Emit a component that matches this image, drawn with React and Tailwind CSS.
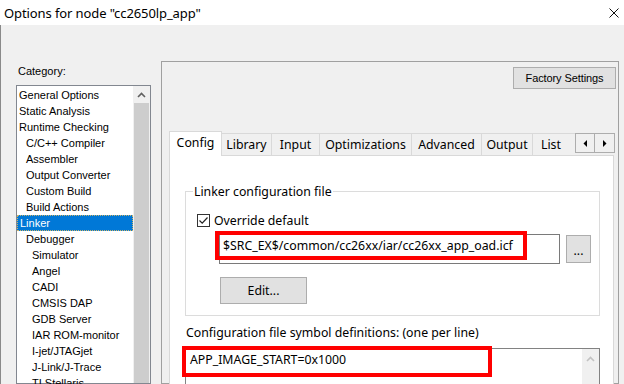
import React from 'react';

const categories = [
  { label: 'General Options', pad: 'pl-[2px]' },
  { label: 'Static Analysis', pad: 'pl-[2px]' },
  { label: 'Runtime Checking', pad: 'pl-[2px]' },
  { label: 'C/C++ Compiler', pad: 'pl-[9px]' },
  { label: 'Assembler', pad: 'pl-[9px]' },
  { label: 'Output Converter', pad: 'pl-[9px]' },
  { label: 'Custom Build', pad: 'pl-[9px]' },
  { label: 'Build Actions', pad: 'pl-[9px]' },
  { label: 'Linker', pad: 'pl-[2px]', selected: true },
  { label: 'Debugger', pad: 'pl-[9px]' },
  { label: 'Simulator', pad: 'pl-[15px]' },
  { label: 'Angel', pad: 'pl-[15px]' },
  { label: 'CADI', pad: 'pl-[15px]' },
  { label: 'CMSIS DAP', pad: 'pl-[15px]' },
  { label: 'GDB Server', pad: 'pl-[15px]' },
  { label: 'IAR ROM-monitor', pad: 'pl-[15px]' },
  { label: 'I-jet/JTAGjet', pad: 'pl-[15px]' },
  { label: 'J-Link/J-Trace', pad: 'pl-[15px]' },
  { label: 'TI Stellaris', pad: 'pl-[15px]' },
];

const tabs = [
  { label: 'Config', w: 'w-[53px]', active: true },
  { label: 'Library', w: 'w-[50px]' },
  { label: 'Input', w: 'w-[48px]' },
  { label: 'Optimizations', w: 'w-[92px]' },
  { label: 'Advanced', w: 'w-[70px]' },
  { label: 'Output', w: 'w-[51px]' },
  { label: 'List', w: 'w-[42px]', clipped: true },
];

function Tab({ tab }) {
  if (tab.active) {
    return (
      <div className={`${tab.w} h-[25px] -mb-px relative z-10 bg-white border-x border-t border-[#d9d9d9] flex items-start justify-center pt-[2px]`}>
        {tab.label}
      </div>
    );
  }
  return (
    <div
      className={`${tab.w} h-[22px] bg-[#f0f0f0] border-t border-[#d9d9d9] flex items-center ${
        tab.clipped ? 'justify-start pl-[8px]' : 'justify-center border-r'
      }`}
    >
      {tab.label}
    </div>
  );
}

export default function App() {
  return (
    <div className="relative w-[624px] h-[384px] overflow-hidden bg-[#f0f0f0] flex flex-col text-black font-['Noto_Sans','Open_Sans',sans-serif] text-[12.3px] leading-[17px]">
      {/* Title bar */}
      <div className="h-[25px] shrink-0 bg-white flex items-center justify-between pl-[4px] pr-[5px]">
        <span className="text-[13px] leading-[20px] tracking-[-0.1px]">Options for node "cc2650lp_app"</span>
        <svg width="10" height="10" viewBox="0 0 10 10" className="mt-[1px]">
          <path d="M0.5 0.5 L9.5 9.5 M9.5 0.5 L0.5 9.5" stroke="#111" strokeWidth="1" fill="none" />
        </svg>
      </div>

      {/* Body */}
      <div className="flex-1 flex border-l border-[#8a8a8a] pl-[15px] min-h-0">
        {/* Category column */}
        <div className="w-[135px] shrink-0 flex flex-col font-['Liberation_Sans',Arial,sans-serif] text-[11px] leading-[15px]">
          <div className="pt-[39px] pl-[2px]">Category:</div>
          <div className="mt-[6px] flex-1 bg-white border border-[#828790] flex min-h-0">
            <div className="flex-1 pt-[1px] flex flex-col">
              {categories.map((c) =>
                c.selected ? (
                  <div
                    key={c.label}
                    className="h-[16px] bg-[#0078d7] text-white border border-dotted border-[#c9b26a] flex items-center pl-[2px] shrink-0"
                  >
                    {c.label}
                  </div>
                ) : (
                  <div key={c.label} className={`h-[16px] flex items-center shrink-0 whitespace-nowrap ${c.pad}`}>
                    {c.label}
                  </div>
                )
              )}
            </div>
            <div className="w-[17px] bg-[#f0f0f0] flex flex-col">
              <div className="h-[17px] flex items-center justify-center">
                <svg width="9" height="6" viewBox="0 0 9 6">
                  <path d="M1 5 L4.5 1.5 L8 5" stroke="#606060" strokeWidth="1.6" fill="none" />
                </svg>
              </div>
              <div className="flex-1 mx-[1px] bg-[#cdcdcd]" />
            </div>
          </div>
        </div>

        {/* Options panel */}
        <div className="ml-[10px] mt-[36px] w-[458px] shrink-0 border border-[#a0a0a0] flex flex-col pl-[7px] pr-[3px]">
          <div className="flex justify-end pt-[5px] -mr-[1px]">
            <button className="w-[103px] h-[22px] bg-[#e1e1e1] border border-[#adadad] font-['Liberation_Sans',Arial,sans-serif] text-[11px] leading-[15px] tracking-[-0.1px]">
              Factory Settings
            </button>
          </div>

          {/* Tab strip */}
          <div className="mt-[42px] h-[24px] flex items-end">
            {tabs.map((t) => (
              <Tab key={t.label} tab={t} />
            ))}
            <div className="self-start mt-[2px] flex">
              <div className="w-[20px] h-[20px] bg-[#f0f0f0] border border-[#adadad] flex items-center justify-center">
                <svg width="4" height="7" viewBox="0 0 4 7">
                  <path d="M4 0 L0.5 3.5 L4 7 Z" fill="#000" />
                </svg>
              </div>
              <div className="w-[20px] h-[20px] bg-[#f0f0f0] border border-l-0 border-[#adadad] flex items-center justify-center">
                <svg width="4" height="7" viewBox="0 0 4 7">
                  <path d="M0 0 L3.5 3.5 L0 7 Z" fill="#000" />
                </svg>
              </div>
            </div>
          </div>

          {/* Tab content */}
          <div className="flex-1 mr-[1px] bg-white border border-[#d9d9d9] pl-[15px] pr-[13px] flex flex-col">
            {/* Group box */}
            <div className="relative mt-[35px] border border-[#dcdcdc] pl-[11px] pb-[11px]">
              <span className="absolute -top-[9px] left-[7px] bg-white px-[1px]">Linker configuration file</span>
              <div className="mt-[20px] h-[16px] flex items-center gap-[4px]">
                <div className="w-[13px] h-[13px] border border-[#333] bg-white flex items-center justify-center">
                  <svg width="11" height="11" viewBox="0 0 11 11">
                    <path d="M1.5 5.5 L4.2 8.2 L9.5 2.5" stroke="#222" strokeWidth="1.2" fill="none" />
                  </svg>
                </div>
                <span>Override default</span>
              </div>
              <div className="mt-[6px] pl-[22px] flex items-start gap-[6px]">
                <div className="w-[341px] h-[30px] border border-[#7a7a7a] bg-white pl-[3px] pt-[2px] whitespace-nowrap">
                  $SRC_EX$/common/cc26xx/iar/cc26xx_app_oad.icf
                </div>
                <button className="mt-[1px] w-[25px] h-[28px] bg-[#e1e1e1] border border-[#adadad] flex items-end justify-center pb-[6px] leading-[10px]">
                  ...
                </button>
              </div>
              <button className="mt-[13px] ml-[23px] w-[87px] h-[27px] bg-[#e1e1e1] border border-[#adadad] flex items-center justify-center">
                Edit...
              </button>
            </div>

            <div className="mt-[8px] pl-[1px]">Configuration file symbol definitions: (one per line)</div>

            <div className="mt-[7px] h-[60px] border border-[#828282] bg-white flex">
              <div className="flex-1 pl-[4px] pt-[2px]">APP_IMAGE_START=0x1000</div>
              <div className="w-[17px] bg-[#f0f0f0] flex flex-col items-center">
                <svg width="9" height="6" viewBox="0 0 9 6" className="mt-[7px]">
                  <path d="M1 5 L4.5 1.5 L8 5" stroke="#c2c2c2" strokeWidth="1.6" fill="none" />
                </svg>
              </div>
            </div>
          </div>
        </div>
      </div>

      {/* Red annotation boxes */}
      <div className="absolute left-[215px] top-[231px] w-[312px] h-[29px] border-4 border-[#ff0000] pointer-events-none" />
      <div className="absolute left-[182px] top-[346px] w-[310px] h-[31px] border-4 border-[#ff0000] pointer-events-none" />
    </div>
  );
}
